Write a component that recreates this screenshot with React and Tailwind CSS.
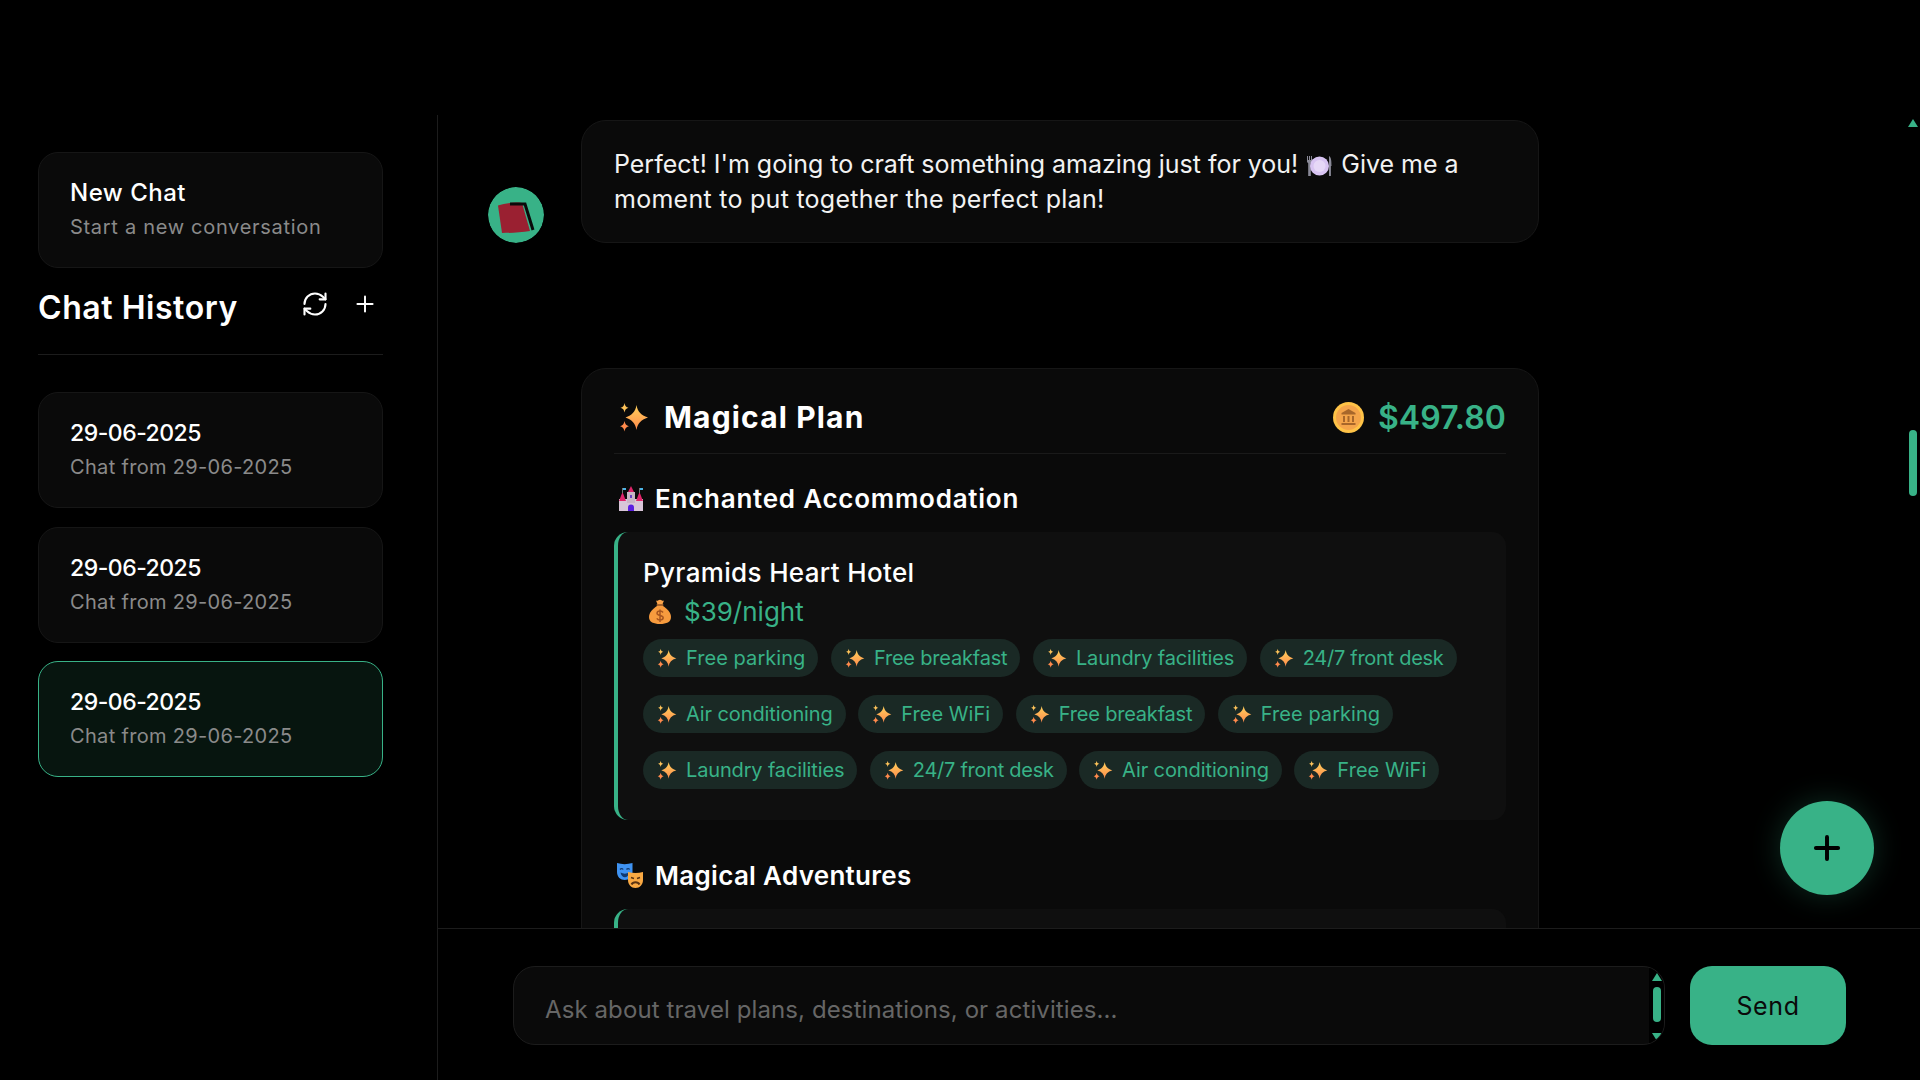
import React from 'react';
import { RefreshCw, Plus } from 'lucide-react';

const Sparkle = ({ className }) => (
  <svg viewBox="2 0 29 30" className={className}>
    <defs>
      <linearGradient id="spark" x1="0" y1="0" x2="0" y2="1">
        <stop offset="0" stopColor="#ffd15c" />
        <stop offset="1" stopColor="#ff8a4c" />
      </linearGradient>
    </defs>
    <path d="M19 3c1.2 6.8 4.2 10 11.5 12.500-7.300 2.500-10.300 5.700-11.500 12.500-1.200-6.800-4.200-10-11-12.500 6.800-2.500 9.800-5.700 11-12.500z" fill="url(#spark)" />
    <path d="M7 1c.5 3 1.500 4 4 4.800-2.500.8-3.500 1.800-4 4.800-.5-3-1.500-4-4-4.800 2.500-.8 3.500-1.800 4-4.800z" fill="#ffc45a" />
    <path d="M7 19c.6 3.200 1.600 4.300 4.500 5.200-2.900.9-3.900 2-4.500 5.300-.6-3.300-1.600-4.400-4.500-5.300 2.900-.9 3.900-2 4.500-5.200z" fill="#ff8a4c" />
  </svg>
);

const Castle = () => (
  <svg viewBox="0 0 24 25" className="h-[25px] w-[24px] shrink-0">
    <rect x="0" y="13" width="24" height="12" fill="#d8c6d8" />
    <rect x="8" y="6" width="8" height="11" fill="#c9b5c4" />
    <path d="M12 0l3 6H9z" fill="#e0246a" />
    <path d="M0 15l3.500-9 3.500 9zM17 15l3.500-9 3.500 9z" fill="#e0246a" />
    <rect x="3" y="2" width="1" height="5" fill="#777" />
    <rect x="20" y="2" width="1" height="5" fill="#777" />
    <path d="M4 2h3v2H4zM21 2h3v2h-3z" fill="#4cb4e6" />
    <rect x="11" y="9" width="2" height="3" fill="#6a3fc0" />
    <path d="M9 25v-3.500a3 3 0 0 1 6 0V25z" fill="#5a1fe0" />
  </svg>
);

const MoneyBag = () => (
  <svg viewBox="0 0 22 25" className="h-[25px] w-[22px] shrink-0">
    <path d="M7 1.500c1.500 1 2.500-.8 4-.8s2.500 1.800 4 .8l-1.800 4.500H8.800z" fill="#f9a34a" />
    <rect x="7.500" y="5" width="7" height="2" rx="1" fill="#a8642a" />
    <path d="M8 7c-4 2.500-8 6.500-8 11 0 5 4.500 7 11 7s11-2 11-7c0-4.500-4-8.500-8-11z" fill="#f79b3e" />
    <path d="M14 13.500c-.6-1-1.600-1.500-3-1.500-1.800 0-3 .8-3 2.200 0 3 6.200 1.600 6.200 4.600 0 1.400-1.300 2.200-3.200 2.200-1.500 0-2.600-.6-3.200-1.600M11 10.500v12.500" fill="none" stroke="#a8561f" strokeWidth="1.500" />
  </svg>
);

const Coin = () => (
  <svg viewBox="0 0 31 31" className="h-[31px] w-[31px] shrink-0">
    <circle cx="15.500" cy="15.500" r="15.500" fill="#ffc347" />
    <circle cx="15.500" cy="15.500" r="12.500" fill="#f5a44a" />
    <path d="M15.500 7l7 4v1.500h-14V11z" fill="#a8662a" />
    <path d="M10 14h2v6h-2zM14.500 14h2v6h-2zM19 14h2v6h-2z" fill="#a8662a" />
    <rect x="8.500" y="21" width="14" height="2" fill="#a8662a" />
  </svg>
);

const Masks = () => (
  <svg viewBox="0 0 26 26" className="h-[26px] w-[26px] shrink-0">
    <path d="M0 1c5 1.500 10 1.500 15.500 0v9c0 5-3.500 8-7.700 8S0 15 0 10z" fill="#3f93f2" />
    <path d="M3 7.500c1-1.300 2.300-1.300 3.200 0M9.500 7.500c1-1.300 2.300-1.300 3.200 0" fill="none" stroke="#123a70" strokeWidth="1.300" />
    <path d="M3.500 10.500c2.700 1.500 6 1.500 8.700 0-.5 3-2.300 4.700-4.300 4.700s-3.900-1.700-4.400-4.700z" fill="#123a70" />
    <path d="M11 10c5 1.300 10 1.300 15 0v8c0 4.500-3.300 8-7.500 8S11 22.500 11 18z" fill="#f9a943" />
    <path d="M14 15.500l3 1M23 15.500l-3 1" fill="none" stroke="#5a3312" strokeWidth="1.400" />
    <path d="M14.500 22.500c1.500-3 6.500-3 8 0" fill="none" stroke="#5a3312" strokeWidth="2" />
  </svg>
);

const Plate = () => (
  <svg viewBox="0 0 25 20" className="mx-[2px] inline-block h-[20px] w-[25px] align-[-3px]">
    <path d="M0 0h1v4h1V0h1v4h1V0h1v6l-1.200 1.200V20H1.200V7.200L0 6z" fill="#8a8a98" />
    <path d="M22 0c2 1 2.500 4 2.500 10h-.6V20H22z" fill="#8a8a98" />
    <circle cx="12.500" cy="10" r="9.500" fill="#d8c4f2" />
    <circle cx="12.500" cy="10" r="6" fill="#e6d8f7" />
  </svg>
);

const Fez = () => (
  <svg viewBox="0 0 56 56" className="h-[56px] w-[56px] rounded-full">
    <circle cx="28" cy="28" r="28" fill="#38b287" />
    <path d="M10 18.500c7-2.500 17-3.500 24-2.500L42 44c-9 1.500-20 2-28 2z" fill="#9a2031" />
    <path d="M22 17h15l8 26" fill="none" stroke="#0a0a0a" strokeWidth="3" />
  </svg>
);

const Triangle = ({ down, className }) => (
  <svg viewBox="0 0 10 8" className={className}>
    <path d={down ? 'M0 0h10L5 8z' : 'M5 0l5 8H0z'} fill="#38b287" />
  </svg>
);

function HistoryCard({ title, subtitle, active, titleClass, subClass }) {
  return (
    <div className={`h-[116px] rounded-[20px] border px-[31px] pt-[22px] ${active ? 'border-[#38b287] bg-[#07150f]' : 'border-[#161616] bg-[#0a0a0a]'}`}>
      <div className={`leading-[36px] font-medium text-white ${titleClass || 'text-[23px] tracking-[-0.5px]'}`}>{title}</div>
      <div className={`text-[20px] leading-[32px] text-[#8a8a8a] ${subClass || 'tracking-[0.32px]'}`}>{subtitle}</div>
    </div>
  );
}

function Pill({ label, track }) {
  return (
    <span className={`inline-flex h-[38px] items-center gap-[9px] rounded-full bg-[#1a2925] pr-[13px] pl-[14px] text-[20px] text-[#38b287] ${track}`}>
      <Sparkle className="h-[20px] w-[20px] shrink-0" />
      {label}
    </span>
  );
}

// Inter runs narrower or wider than the original face depending on the word
const TRACKING = {
  'Free parking': 'tracking-[0.05px]',
  'Free breakfast': 'tracking-[-0.2px]',
  'Laundry facilities': 'tracking-[-0.15px]',
  '24/7 front desk': 'tracking-[-0.28px]',
  'Air conditioning': 'tracking-[-0.1px]',
  'Free WiFi': 'tracking-[0.05px]',
};

const AMENITIES = [
  'Free parking', 'Free breakfast', 'Laundry facilities', '24/7 front desk',
  'Air conditioning', 'Free WiFi', 'Free breakfast', 'Free parking',
  'Laundry facilities', '24/7 front desk', 'Air conditioning', 'Free WiFi',
];

export default function App() {
  return (
    <div className='h-screen overflow-hidden bg-black pt-[115px] font-["Inter","Liberation_Sans",sans-serif] text-white'>
      <div className="flex h-full">
        <aside className="w-[438px] shrink-0 border-r border-[#1c1c1c] px-[38px] pt-[37px] pr-[54px]">
          <HistoryCard title="New Chat" subtitle="Start a new conversation" titleClass="text-[24px] tracking-[0.5px]" subClass="tracking-[0.7px]" />
          <div className="mt-[18px] flex h-[69px] items-center justify-between border-b border-[#1c1c1c] pb-[24px]">
            <h2 className="text-[32px] font-semibold tracking-[0.55px]">Chat History</h2>
            <div className="mr-[5px] -mb-[1px] flex -translate-y-[5px] items-center gap-[22px]">
              <RefreshCw size={28} strokeWidth={1.8} className="-translate-x-[1px]" />
              <Plus size={26} strokeWidth={1.8} />
            </div>
          </div>
          <div className="mt-[37px] flex flex-col gap-[18.5px]">
            <HistoryCard title="29-06-2025" subtitle="Chat from 29-06-2025" />
            <HistoryCard title="29-06-2025" subtitle="Chat from 29-06-2025" />
            <HistoryCard title="29-06-2025" subtitle="Chat from 29-06-2025" active />
          </div>
        </aside>

        <main className="relative flex min-w-0 flex-1 flex-col">
          <div className="h-[813px] overflow-hidden pt-[5px] pl-[50px]">
            <div className="flex items-end gap-[37px]">
              <Fez />
              <div className="h-[123px] w-[958px] rounded-[25px] border border-[#161616] bg-[#0a0a0a] px-[32px] pt-[26px] text-[25px] leading-[35px] text-[#f2f2f2]">
                <span className="block whitespace-nowrap tracking-[-0.02px]">Perfect! I'm going to craft something amazing just for you! <Plate /> Give me a</span>
                <span className="block tracking-[0.27px]">moment to put together the perfect plan!</span>
              </div>
            </div>

            <div className="mt-[125px] ml-[93px] h-[900px] w-[958px] rounded-[25px] border border-[#161616] bg-[#0a0a0a] px-[32px] pt-[28px]">
              <div className="flex h-[57px] items-start justify-between border-b border-[#1a1a1a]">
                <div className="flex items-center gap-[15px] pl-[5px]">
                  <Sparkle className="h-[30px] w-[30px]" />
                  <span className="text-[30px] leading-[40px] font-bold tracking-[1.15px]">Magical Plan</span>
                </div>
                <div className="flex items-center gap-[14px]">
                  <Coin />
                  <span className="pt-[1px] text-[32px] leading-[40px] font-semibold tracking-[0.1px] text-[#38b287]">$497.80</span>
                </div>
              </div>

              <div className="mt-[29px] flex h-[30px] items-center gap-[12px] pl-[5px]">
                <Castle />
                <span className="text-[26px] font-semibold tracking-[0.75px]">Enchanted Accommodation</span>
              </div>

              <div className="mt-[19px] h-[288px] rounded-[14px] border-l-[4px] border-[#38b287] bg-[#0f0f0f] pt-[21px] pl-[25px]">
                <div className="text-[26px] leading-[40px] font-medium tracking-[0.35px]">Pyramids Heart Hotel</div>
                <div className="-mt-[1px] flex h-[38px] items-center gap-[13px] pl-[6px] text-[26px] text-[#38b287]">
                  <MoneyBag />
                  $39/night
                </div>
                <div className="mt-[9px] flex flex-wrap gap-x-[12.5px] gap-y-[18px] pr-[20px]">
                  {AMENITIES.map((label, i) => <Pill key={i} label={label} track={TRACKING[label]} />)}
                </div>
              </div>

              <div className="mt-[40px] flex h-[30px] items-center gap-[12px] pl-[3px]">
                <Masks />
                <span className="text-[26px] font-semibold tracking-[0.3px]">Magical Adventures</span>
              </div>
              <div className="mt-[19px] h-[120px] rounded-[14px] border-l-[4px] border-[#38b287] bg-[#0f0f0f]" />
            </div>
          </div>

          <div className="flex h-[152px] gap-[25px] border-t border-[#1c1c1c] pt-[37px] pl-[75px]">
            <div className="relative h-[79px] w-[1152px] overflow-hidden rounded-[22px] border border-[#1c1c1c] bg-[#0a0a0a] pt-[25px] pl-[31px] text-[24px] leading-[36px] tracking-[0.1px] text-[#666666]">
              Ask about travel plans, destinations, or activities...
              <div className="absolute top-0 right-0 bottom-0 flex w-[15px] flex-col items-center bg-black pt-[6px]">
                <Triangle className="h-[8px] w-[10px]" />
                <div className="mt-[6px] h-[35px] w-[8px] rounded-full bg-[#38b287]" />
                <Triangle down className="mt-[11px] h-[8px] w-[10px]" />
              </div>
            </div>
            <button className="h-[79px] w-[156px] rounded-[22px] bg-[#38b287] pt-[2px] text-[25px] tracking-[0.6px] text-[#0a0a0a]">Send</button>
          </div>

          <button className="absolute top-[686px] right-[46px] flex h-[94px] w-[94px] items-center justify-center rounded-full bg-[#38b287] text-black shadow-[0_0_30px_rgba(56,178,135,0.25)]">
            <Plus size={38} strokeWidth={2.5} />
          </button>

          <div className="absolute top-[4px] right-[2px] flex w-[10px] flex-col items-center">
            <Triangle className="h-[8px] w-[10px]" />
            <div className="mt-[303px] h-[66px] w-[8px] rounded-full bg-[#38b287]" />
          </div>
        </main>
      </div>
    </div>
  );
}
